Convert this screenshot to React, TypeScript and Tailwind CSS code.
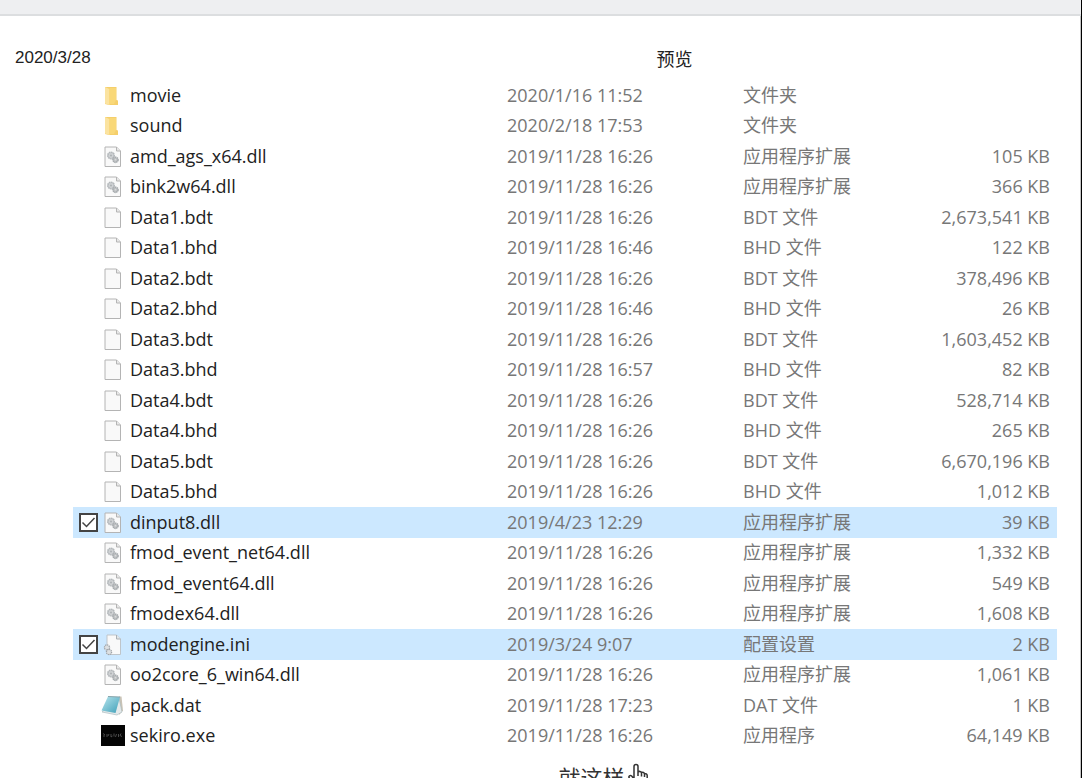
import React from "react";

type FileKind = "folder" | "dll" | "file" | "ini" | "dat" | "exe";

interface FileRow {
  name: string;
  date: string;
  type: string;
  size?: string;
  kind: FileKind;
  selected?: boolean;
}

const files: FileRow[] = [
  { name: "movie", date: "2020/1/16 11:52", type: "文件夹", kind: "folder" },
  { name: "sound", date: "2020/2/18 17:53", type: "文件夹", kind: "folder" },
  { name: "amd_ags_x64.dll", date: "2019/11/28 16:26", type: "应用程序扩展", size: "105 KB", kind: "dll" },
  { name: "bink2w64.dll", date: "2019/11/28 16:26", type: "应用程序扩展", size: "366 KB", kind: "dll" },
  { name: "Data1.bdt", date: "2019/11/28 16:26", type: "BDT 文件", size: "2,673,541 KB", kind: "file" },
  { name: "Data1.bhd", date: "2019/11/28 16:46", type: "BHD 文件", size: "122 KB", kind: "file" },
  { name: "Data2.bdt", date: "2019/11/28 16:26", type: "BDT 文件", size: "378,496 KB", kind: "file" },
  { name: "Data2.bhd", date: "2019/11/28 16:46", type: "BHD 文件", size: "26 KB", kind: "file" },
  { name: "Data3.bdt", date: "2019/11/28 16:26", type: "BDT 文件", size: "1,603,452 KB", kind: "file" },
  { name: "Data3.bhd", date: "2019/11/28 16:57", type: "BHD 文件", size: "82 KB", kind: "file" },
  { name: "Data4.bdt", date: "2019/11/28 16:26", type: "BDT 文件", size: "528,714 KB", kind: "file" },
  { name: "Data4.bhd", date: "2019/11/28 16:26", type: "BHD 文件", size: "265 KB", kind: "file" },
  { name: "Data5.bdt", date: "2019/11/28 16:26", type: "BDT 文件", size: "6,670,196 KB", kind: "file" },
  { name: "Data5.bhd", date: "2019/11/28 16:26", type: "BHD 文件", size: "1,012 KB", kind: "file" },
  { name: "dinput8.dll", date: "2019/4/23 12:29", type: "应用程序扩展", size: "39 KB", kind: "dll", selected: true },
  { name: "fmod_event_net64.dll", date: "2019/11/28 16:26", type: "应用程序扩展", size: "1,332 KB", kind: "dll" },
  { name: "fmod_event64.dll", date: "2019/11/28 16:26", type: "应用程序扩展", size: "549 KB", kind: "dll" },
  { name: "fmodex64.dll", date: "2019/11/28 16:26", type: "应用程序扩展", size: "1,608 KB", kind: "dll" },
  { name: "modengine.ini", date: "2019/3/24 9:07", type: "配置设置", size: "2 KB", kind: "ini", selected: true },
  { name: "oo2core_6_win64.dll", date: "2019/11/28 16:26", type: "应用程序扩展", size: "1,061 KB", kind: "dll" },
  { name: "pack.dat", date: "2019/11/28 17:23", type: "DAT 文件", size: "1 KB", kind: "dat" },
  { name: "sekiro.exe", date: "2019/11/28 16:26", type: "应用程序", size: "64,149 KB", kind: "exe" },
];

const Page = () => (
  <>
    <path d="M4 2h11.500l4 4v15.500H4z" fill="#f9f9f9" stroke="#b4b4b4" />
    <path d="M15.500 2v4h4" fill="#e8e8e8" stroke="#b4b4b4" />
  </>
);

const FileIcon: React.FC<{ kind: FileKind }> = ({ kind }) => (
  <svg viewBox="0 0 24 24" className="block size-6" aria-hidden="true">
    {kind === "folder" && (
      <>
        <path d="M4 3h11.500v13l1.500.5V21H8l-4-1z" fill="#f5cf6b" />
        <path d="M4 3l4.500 2v16L4 19.500z" fill="#fbe3a0" />
        <path d="M8.500 4H15v12l-2 4H8.500z" fill="#f9d878" />
      </>
    )}
    {kind === "file" && <Page />}
    {kind === "dll" && (
      <>
        <Page />
        <circle cx="10" cy="10.500" r="3.200" fill="#d0d3d5" stroke="#b4b8bb" strokeWidth="1.600" strokeDasharray="1.600 .5" />
        <circle cx="10" cy="10.500" r="1.100" fill="#b0b4b7" />
        <circle cx="14.500" cy="14.800" r="2.600" fill="#bfc2c4" stroke="#a6aaad" strokeWidth="1.500" strokeDasharray="1.400 .5" />
        <circle cx="14.500" cy="14.800" r=".8" fill="#ddd" />
      </>
    )}
    {kind === "ini" && (
      <>
        <path d="M6 2h9.500l4 4v15.500H8l-2-6z" fill="#f9f9f9" stroke="#bfc5ca" />
        <path d="M15.500 2v4h4" fill="#e3e6e8" stroke="#a9b0b5" />
        <circle cx="6" cy="14.500" r="2.600" fill="#dde0e2" stroke="#a0a4a8" strokeWidth="1.300" strokeDasharray="1.300 .7" />
        <circle cx="8" cy="19" r="2.600" fill="#dde0e2" stroke="#a0a4a8" strokeWidth="1.300" strokeDasharray="1.300 .7" />
      </>
    )}
    {kind === "dat" && (
      <>
        <defs>
          <linearGradient id="notepad" x1="0" y1="0" x2="1" y2="1">
            <stop offset="0" stopColor="#b9e6ee" />
            <stop offset="1" stopColor="#3f9fb8" />
          </linearGradient>
        </defs>
        <path d="M18 2.500h2.500l1.500 14-4 4.500z" fill="#c9c3b6" />
        <path d="M1 18l15 3 5-3-3-14z" fill="#e4e9ea" stroke="#a3b6ba" strokeWidth=".6" />
        <path d="M7 2.500L19 3l-4.500 16L.5 16.500z" fill="url(#notepad)" />
        <path d="M7 2.500L19 3" stroke="#8aa5ab" strokeWidth="1.200" />
      </>
    )}
    {kind === "exe" && (
      <>
        <path d="M0 1h24v21H0z" fill="#050505" />
        <path
          d="M2 9.500l2 1.500M3 13v-2M6 10v3M8 10l-1 2M10 10v3l1.500-1M13 9.500v3M15.500 10l-1 3M17.500 10v3M20 9.500l-1 2 2 1"
          stroke="#5c5c5c"
          strokeWidth=".8"
          fill="none"
        />
      </>
    )}
  </svg>
);

// pointing hand at the end of the closing line
const HandIcon = () => (
  <svg viewBox="0 0 22 26" className="h-[26px] w-[22px]" fill="none" stroke="#333" strokeWidth="1.500" aria-hidden="true">
    <path d="M7 16V3.500C7 .8 11 .8 11 3.500V9c1-1 3-.8 3.500.7 1.200-.8 2.800-.2 3 1.100 1.400-.5 2.700.3 2.700 1.700V18c0 4-2.500 6.500-6 6.500h-3c-3 0-4-2-5.500-4.500L2.200 15c-1-1.800 1-3.200 2.500-2L7 16M11 9v4M14.500 10v3.500M17.500 11v3" />
  </svg>
);

const App: React.FC = () => {
  return (
    <div className="flex h-screen flex-col overflow-hidden border-r border-black bg-white font-['Open_Sans','Noto_Sans_CJK_SC',sans-serif]">
      <div className="h-4 shrink-0 border-b-2 border-[#dcdee0] bg-[#eeeff1]" />
      <main className="grow border-r border-[#c4c4c4]">
        {/* print header */}
        <header className="grid h-16 grid-cols-[1fr_auto_1fr] items-start pt-7 pl-[15px] leading-7 text-[#222]">
          <span className="font-['Liberation_Sans',sans-serif] text-[17px]">2020/3/28</span>
          <h1 className="pl-[254px] text-lg leading-[30px]">预览</h1>
        </header>

        {/* file list */}
        <div className="pr-[23px] pl-[73px]">
          <table className="w-full table-fixed text-left text-lg leading-6 whitespace-nowrap text-[#777]">
            <colgroup>
              <col className="w-7" />
              <col className="w-[29px]" />
              <col />
              <col className="w-[236px]" />
              <col className="w-[150px]" />
              <col className="w-[164px]" />
            </colgroup>
            <tbody>
              {files.map((file) => (
                <tr
                  key={file.name}
                  className={`odd:h-[31px] even:h-[30px] ${file.selected ? "bg-[#cce8ff]" : ""}`}
                >
                  <td className="p-0 pl-[6px]">
                    {file.selected && (
                      <span className="relative block size-[19px]">
                        <input
                          type="checkbox"
                          defaultChecked
                          aria-label={file.name}
                          className="peer block size-[19px] appearance-none border-2 border-[#444] bg-white"
                        />
                        <svg
                          viewBox="0 0 19 19"
                          className="pointer-events-none absolute inset-0 hidden peer-checked:block"
                          fill="none"
                          stroke="#444"
                          strokeWidth="1.500"
                        >
                          <path d="M3.500 9.500l4 4 8-8.500" />
                        </svg>
                      </span>
                    )}
                  </td>
                  <td className="p-0">
                    <FileIcon kind={file.kind} />
                  </td>
                  <td className="p-0 pb-0.5 text-[#222]">{file.name}</td>
                  <td className="p-0 pb-0.5">{file.date}</td>
                  <td className="p-0 pb-0.5">{file.type}</td>
                  <td className="p-0 pr-[7px] pb-0.5 text-right">{file.size}</td>
                </tr>
              ))}
            </tbody>
          </table>
        </div>

        <p className="flex items-start justify-center gap-0.5 pt-3 pr-[125px] pl-[252px] text-[22px] leading-7 text-[#333]">
          就这样
          <HandIcon />
        </p>
      </main>
    </div>
  );
};

export default App;
